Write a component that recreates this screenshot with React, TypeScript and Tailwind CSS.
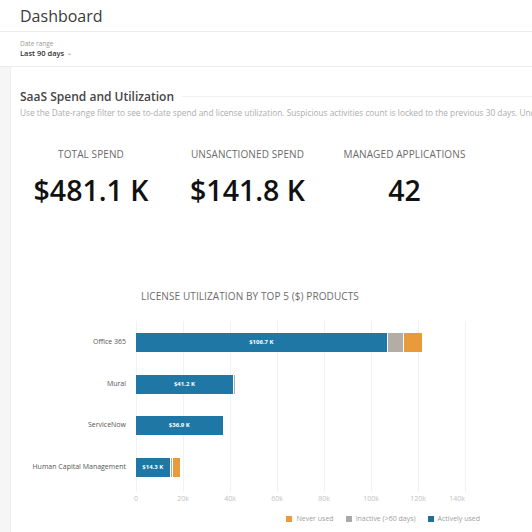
const products = [
  { name: 'Office 365', active: 106.7, inactive: 6.5, never: 7.5, label: '$106.7 K' },
  { name: 'Mural', active: 41.2, inactive: 0.6, never: 0, label: '$41.2 K' },
  { name: 'ServiceNow', active: 36.9, inactive: 0, never: 0, label: '$36.9 K' },
  { name: 'Human Capital Management', active: 14.3, inactive: 0.8, never: 2.6, label: '$14.3 K' },
];

const ticks = ['0', '20k', '40k', '60k', '80k', '100k', '120k', '140k'];
const PX_PER_K = 2.35;

function Kpi({ label, value }: { label: string; value: string }) {
  return (
    <div className="flex flex-col items-center">
      <div className="text-[10px] tracking-[0.01em] text-[#6b6b6b] uppercase">{label}</div>
      <div className="mt-[13px] text-[28.5px] leading-[30px] font-semibold text-[#111]">{value}</div>
    </div>
  );
}

export default function App() {
  return (
    <div className="w-[532px] h-[532px] overflow-hidden bg-[#f6f6f6] font-['Open_Sans',sans-serif]">
      <div className="h-[32px] bg-white border-b border-[#ececec] pl-[20px] flex items-center">
        <h1 className="text-[16px] text-[#3b3b3b]">Dashboard</h1>
      </div>
      <div className="h-[35px] bg-white border-b border-[#ececec] pl-[20px] pt-[7px]">
        <div className="text-[6.5px] leading-[9px] text-[#9a9a9a]">Date range</div>
        <div className="text-[7.5px] leading-[10px] font-semibold text-[#333] flex items-center gap-[3px]">
          Last 90 days <span className="text-[#aaa] text-[6px]">⌄</span>
        </div>
      </div>

      <div className="ml-[10px] h-full bg-white border-l border-[#eeeeee] pl-[9px]">
        <div className="flex items-center pt-[21px]">
          <h2 className="text-[12px] leading-[17px] font-semibold text-[#454545] whitespace-nowrap">SaaS Spend and Utilization</h2>
          <div className="flex-1 ml-[8px] border-t border-[#f0f0f0]" />
        </div>
        <p className="mt-[3px] text-[8.3px] leading-[10px] text-[#acacac] whitespace-nowrap">
          Use the Date-range filter to see to-date spend and license utilization. Suspicious activities count is locked to the previous 30 days. Under
        </p>

        <div className="grid grid-cols-[156px_157px_157px] mt-[29px] -ml-[7px]">
          <Kpi label="Total Spend" value="$481.1 K" />
          <Kpi label="Unsanctioned Spend" value="$141.8 K" />
          <Kpi label="Managed Applications" value="42" />
        </div>

        <div className="mt-[84px] w-[460px] text-center text-[10px] text-[#6b6b6b] tracking-[0.01em]">
          LICENSE UTILIZATION BY TOP 5 ($) PRODUCTS
        </div>

        <div className="relative mt-[17px] w-[500px]">
          <div className="absolute left-[116px] top-0 h-[171px] w-[340px]">
            {ticks.map((t, i) => (
              <div
                key={t}
                className="absolute top-0 h-full border-l border-[#f2f2f2]"
                style={{ left: i * 47 }}
              />
            ))}
          </div>

          <div className="relative flex flex-col gap-[22.5px] pt-[12px] h-[171px]">
            {products.map((p) => (
              <div key={p.name} className="flex items-center h-[19px]">
                <div className="w-[106px] text-right text-[7px] text-[#555] whitespace-nowrap">{p.name}</div>
                <div className="ml-[10px] flex h-[19px] items-stretch">
                  <div
                    className="bg-[#1f77a5] flex items-center justify-center text-white text-[6px] font-bold"
                    style={{ width: p.active * PX_PER_K }}
                  >
                    {p.label}
                  </div>
                  {p.inactive > 0 && (
                    <div className="bg-[#b3ada5] ml-[1px]" style={{ width: p.inactive * PX_PER_K }} />
                  )}
                  {p.never > 0 && (
                    <div className="bg-[#e99a3a] ml-[1px]" style={{ width: p.never * PX_PER_K }} />
                  )}
                </div>
              </div>
            ))}
          </div>

          <div className="relative h-[14px] ml-[116px] w-[350px]">
            {ticks.map((t, i) => (
              <span
                key={t}
                className="absolute top-[2px] -translate-x-1/2 text-[7px] text-[#c2c2c2]"
                style={{ left: i === 7 ? 321 : i * 47 }}
              >
                {t}
              </span>
            ))}
          </div>

          <div className="mt-[8px] flex justify-end gap-[12px] pr-[40px] text-[7px] text-[#a0a0a0]">
            <div className="flex items-center gap-[4px]">
              <span className="w-[6px] h-[6px] bg-[#e99a3a]" />Never used
            </div>
            <div className="flex items-center gap-[4px]">
              <span className="w-[6px] h-[6px] bg-[#aaa]" />Inactive (&gt;60 days)
            </div>
            <div className="flex items-center gap-[4px]">
              <span className="w-[6px] h-[6px] bg-[#1f6f95]" />Actively used
            </div>
          </div>
        </div>
      </div>
    </div>
  );
}
